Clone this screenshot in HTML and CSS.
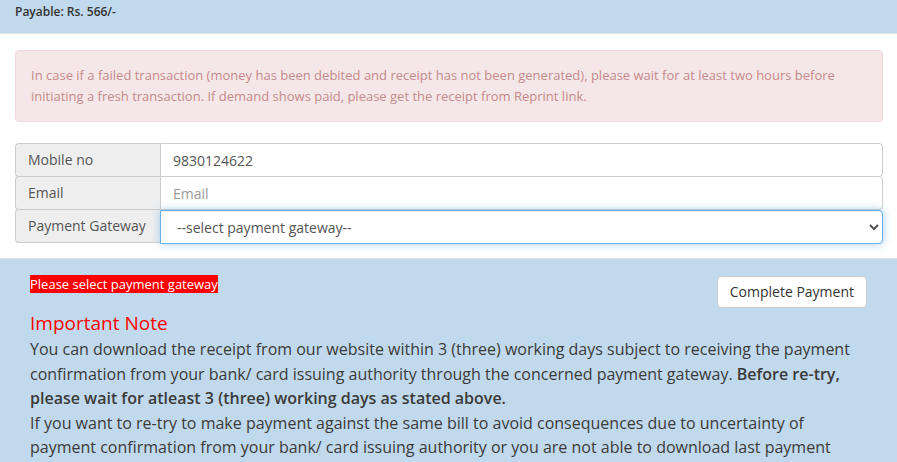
FILE: index.html
```html
<!DOCTYPE html>
<html lang="en">
<head>
  <meta charset="UTF-8">
  <meta name="viewport" content="width=device-width, initial-scale=1.0">
  <title>Payment</title>
  <link rel="stylesheet" href="styles.css">
</head>
<body>
  <div class="payable-bar">Payable: Rs. 566/-</div>
  <div class="content">
    <div class="alert">
      In case if a failed transaction (money has been debited and receipt has not been generated), please wait for at least two hours before initiating a fresh transaction. If demand shows paid, please get the receipt from Reprint link.
    </div>
    <div class="form-rows">
      <div class="input-group">
        <span class="addon">Mobile no</span>
        <input class="field" type="text" value="9830124622">
      </div>
      <div class="input-group">
        <span class="addon">Email</span>
        <input class="field" type="text" placeholder="Email">
      </div>
      <div class="input-group">
        <span class="addon">Payment Gateway</span>
        <select class="field select-focus">
          <option>--select payment gateway--</option>
        </select>
      </div>
    </div>
  </div>
  <div class="note-panel">
    <div class="action-row">
      <span class="error-tag">Please select payment gateway</span>
      <button class="btn">Complete Payment</button>
    </div>
    <h4 class="note-title">Important Note</h4>
    <p class="note-text">
      You can download the receipt from our website within 3 (three) working days subject to receiving the payment confirmation from your bank/ card issuing authority through the concerned payment gateway. <b>Before re-try, please wait for atleast 3 (three) working days as stated above.</b><br>
      If you want to re-try to make payment against the same bill to avoid consequences due to uncertainty of payment confirmation from your bank/ card issuing authority or you are not able to download last payment receipt, please contact us.
    </p>
  </div>
</body>
</html>
```

FILE: styles.css
```css
body {
  margin: 0;
  font-family: 'Open Sans', sans-serif;
  color: #333;
  background: #fff;
}
.payable-bar {
  background: #c1d9ec;
  height: 33px;
  padding: 0 15px;
  font-size: 12px;
  font-weight: 600;
  line-height: 23px;
  color: #333;
  border-bottom: 1px solid #e3e3e3;
}
.content {
  padding: 16px 14px 15px 15px;
}
.alert {
  background: #f5e7e8;
  border: 1px solid #f0d8dc;
  border-radius: 4px;
  color: #c48a8c;
  font-size: 13px;
  line-height: 21px;
  padding: 14px 15px 14px 15px;
}
.form-rows {
  margin-top: 21px;
}
.input-group {
  display: flex;
  height: 34px;
}
.input-group + .input-group {
  margin-top: -1px;
}
.addon {
  box-sizing: border-box;
  width: 145px;
  flex: none;
  background: #eee;
  border: 1px solid #ccc;
  border-right: none;
  border-radius: 4px 0 0 4px;
  padding: 6px 12px;
  font-size: 14px;
  line-height: 20px;
  color: #555;
}
.field {
  box-sizing: border-box;
  flex: 1;
  height: 34px;
  border: 1px solid #ccc;
  border-radius: 0 4px 4px 0;
  padding: 6px 12px;
  font-family: 'Open Sans', sans-serif;
  font-size: 14px;
  color: #555;
  background: #fff;
  outline: none;
}
.field::placeholder {
  color: #999;
}
.select-focus {
  margin-top: 1px;
  padding-left: 12px;
  border-color: #66afe9;
  box-shadow: inset 0 1px 1px rgba(0,0,0,0.075), 0 0 8px rgba(102,175,233,0.6);
}
.note-panel {
  background: #c1d9ec;
  border-top: 1px solid #e3e3e3;
  padding: 16px 30px 20px 30px;
}
.action-row {
  display: flex;
  justify-content: space-between;
  align-items: flex-start;
}
.error-tag {
  background: #f00;
  color: #fff;
  font-size: 13px;
  line-height: 18px;
}
.btn {
  margin-top: 1px;
  background: #fff;
  border: 1px solid #ccc;
  border-radius: 4px;
  padding: 6px 12px;
  font-family: 'Open Sans', sans-serif;
  font-size: 14px;
  line-height: 18px;
  color: #333;
}
.note-title {
  margin: 2px 0 0;
  color: #f00;
  font-size: 19px;
  font-weight: 400;
  line-height: 26px;
}
.note-text {
  margin: 1px 0 0;
  font-size: 16px;
  line-height: 24.5px;
  color: #3b3b3b;
}
.note-text b {
  font-weight: 600;
}
```
